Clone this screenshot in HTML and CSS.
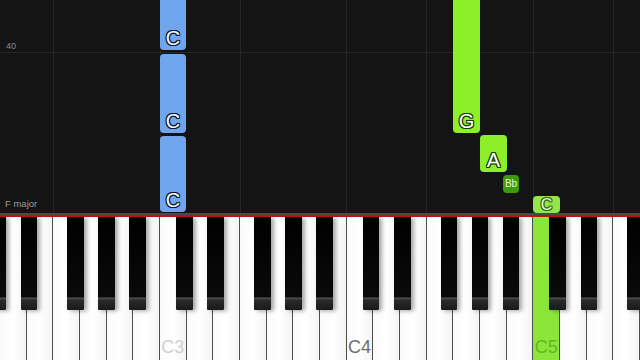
FILE: index.html
```html
<!DOCTYPE html>
<html>
<head>
<meta charset="utf-8">
<link rel="stylesheet" href="styles.css">
</head>
<body>
<div class="app">
  <div class="roll">
    <div class="vline" style="left:53px"></div>
    <div class="vline" style="left:160px"></div>
    <div class="vline" style="left:240px"></div>
    <div class="vline" style="left:346px"></div>
    <div class="vline" style="left:426px"></div>
    <div class="vline" style="left:533px"></div>
    <div class="vline" style="left:613px"></div>
    <div class="hline" style="top:52px"></div>
    <span class="measure">40</span>
    <span class="keysig">F major</span>

    <div class="note blue" style="left:160px;top:-6px;width:26px;height:56px"><span>C</span></div>
    <div class="note blue" style="left:160px;top:54px;width:26px;height:79px"><span>C</span></div>
    <div class="note blue" style="left:160px;top:136px;width:26px;height:76px"><span>C</span></div>

    <div class="note green" style="left:453px;top:-6px;width:27px;height:139px"><span>G</span></div>
    <div class="note green" style="left:480px;top:135px;width:27px;height:37px"><span>A</span></div>
    <div class="note dgreen" style="left:503px;top:175px;width:16px;height:18px"><span>Bb</span></div>
    <div class="note green low" style="left:533px;top:196px;width:27px;height:17px"><span>C</span></div>
  </div>
  <div class="rule"></div>
  <div class="keyboard">
    <div class="whites">
      <div class="white"></div>
      <div class="white"></div>
      <div class="white"></div>
      <div class="white"></div>
      <div class="white"></div>
      <div class="white"></div>
      <div class="white"><span class="lbl c3">C3</span></div>
      <div class="white"></div>
      <div class="white"></div>
      <div class="white"></div>
      <div class="white"></div>
      <div class="white"></div>
      <div class="white"></div>
      <div class="white"><span class="lbl c4">C4</span></div>
      <div class="white"></div>
      <div class="white"></div>
      <div class="white"></div>
      <div class="white"></div>
      <div class="white"></div>
      <div class="white"></div>
      <div class="white lit"><span class="lbl c5">C5</span></div>
      <div class="white"></div>
      <div class="white"></div>
      <div class="white"></div>
    </div>
    <div class="black" style="left:-10.7px"></div>
    <div class="black" style="left:20.7px"></div>
    <div class="black" style="left:67.3px"></div>
    <div class="black" style="left:98.3px"></div>
    <div class="black" style="left:129.3px"></div>
    <div class="black" style="left:176px"></div>
    <div class="black" style="left:207.3px"></div>
    <div class="black" style="left:254px"></div>
    <div class="black" style="left:285px"></div>
    <div class="black" style="left:316px"></div>
    <div class="black" style="left:362.7px"></div>
    <div class="black" style="left:394px"></div>
    <div class="black" style="left:440.7px"></div>
    <div class="black" style="left:471.7px"></div>
    <div class="black" style="left:502.7px"></div>
    <div class="black" style="left:549.3px"></div>
    <div class="black" style="left:580.7px"></div>
    <div class="black" style="left:627.3px"></div>
  </div>
</div>
</body>
</html>
```
FILE: styles.css
```css
* { box-sizing: border-box; }
html, body { margin: 0; padding: 0; background: #131313; }
body { width: 640px; height: 360px; overflow: hidden; font-family: "Liberation Sans", Arial, sans-serif; }
.app { display: flex; flex-direction: column; width: 640px; height: 360px; }
.roll { position: relative; height: 213px; background: #141414; overflow: hidden; flex: none; }
.vline { position: absolute; top: 0; bottom: 0; width: 1px; background: #262626; }
.hline { position: absolute; left: 0; right: 0; height: 1px; background: #262626; }
.measure { position: absolute; left: 6px; top: 41px; font-size: 9px; color: #8a8a8a; }
.keysig { position: absolute; left: 5px; top: 198px; font-size: 9.5px; color: #9a9a9a; }
.note { position: absolute; border-radius: 4px; display: flex; align-items: flex-end; justify-content: center; padding-bottom: 2px; }
.note span { font-size: 20px; line-height: 19px; color: #fff; }
.blue { background: #6fa6ee; }
.blue span { text-shadow: 1px 0 0 #0b1830, -1px 0 0 #0b1830, 0 1px 0 #0b1830, 0 -1px 0 #0b1830, 1px 1px 0 #0b1830, -1px -1px 0 #0b1830, 1px -1px 0 #0b1830, -1px 1px 0 #0b1830; }
.green { background: #8cef28; }
.green span { text-shadow: 1px 0 0 #1a3a04, -1px 0 0 #1a3a04, 0 1px 0 #1a3a04, 0 -1px 0 #1a3a04, 1px 1px 0 #1a3a04, -1px -1px 0 #1a3a04, 1px -1px 0 #1a3a04, -1px 1px 0 #1a3a04; }
.low { background: #93e64a; align-items: center; padding: 0; }
.low span { font-size: 16px; line-height: 15px; opacity: 0.75; }
.dgreen { background: #3c9a0e; align-items: center; padding: 0; }
.dgreen span { font-size: 10px; line-height: 10px; color: #e6f5d8; text-shadow: none; }
.rule { height: 4px; flex: none; background: linear-gradient(#4a4a4a 0, #4a4a4a 2px, #c40e0e 2px, #c40e0e 4px); }
.keyboard { position: relative; flex: 1; overflow: hidden; }
.whites { display: flex; height: 100%; }
.white { flex: 1; position: relative; background: linear-gradient(90deg, #fbfbfb, #ffffff 50%, #f4f4f4); border-right: 1px solid #4d4d4d; display: flex; align-items: flex-end; justify-content: center; }
.white.lit { background: #8ce63a; }
.lbl { font-size: 18px; line-height: 18px; margin-bottom: 4px; }
.c3 { color: #cfcfcf; }
.c4 { color: #6d6d6d; }
.c5 { color: #64b424; }
.black { position: absolute; top: 0; width: 16.7px; height: 93px; background: linear-gradient(#000 0, #0a0a0a 80px, #555 81px, #2a2a2a 83px, #1a1a1a 93px); box-shadow: 3px 1px 4px rgba(0,0,0,0.35); border-radius: 0 0 1px 1px; }
```
